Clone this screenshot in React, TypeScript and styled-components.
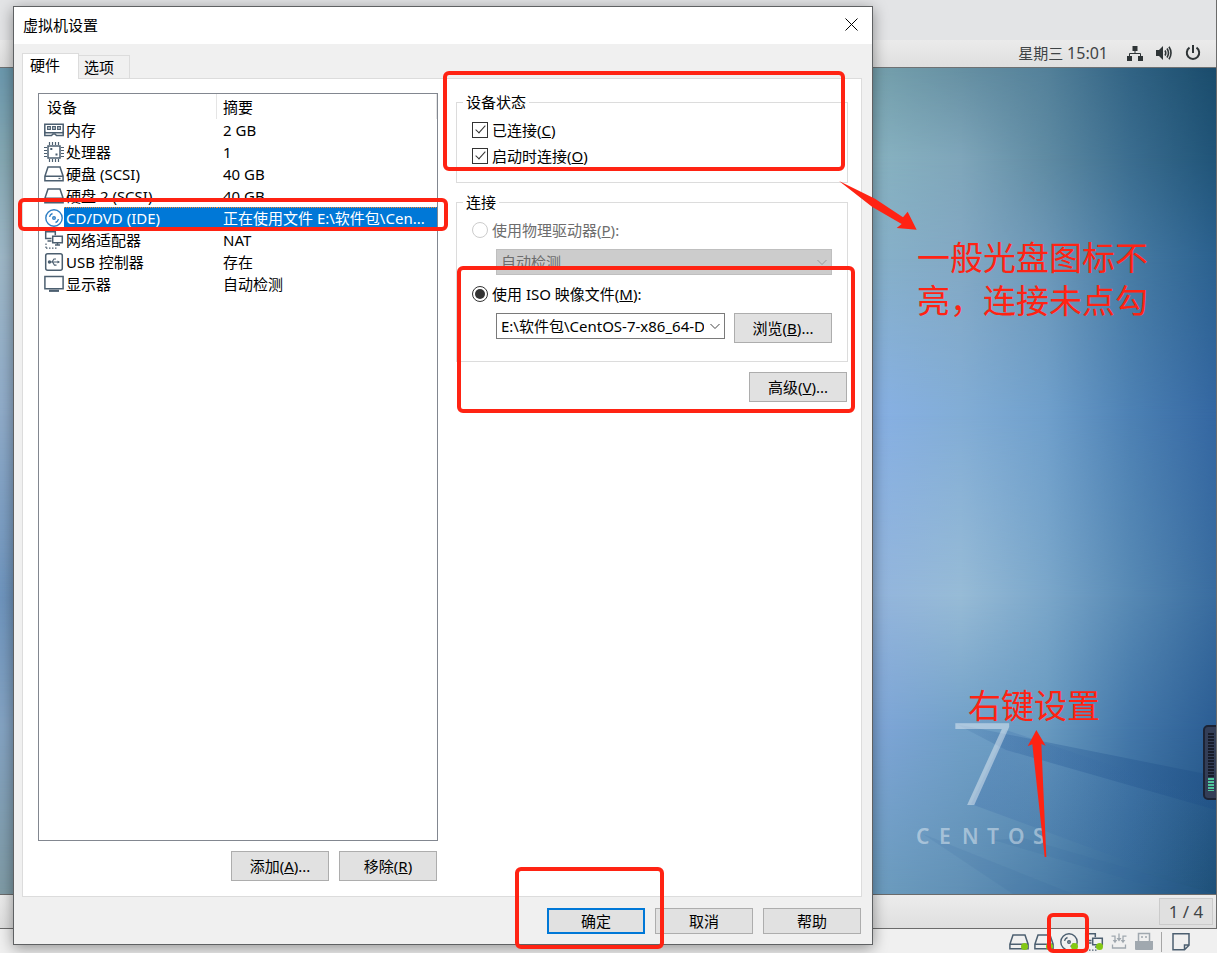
import React from "react";
import styled, { createGlobalStyle, css } from "styled-components";

const RED = "#ff2313";
const SLATE = "#4c5f70";
const LINE = "#dcdcdc";

const GlobalStyle = createGlobalStyle`
  *, *::before, *::after { box-sizing: border-box; }
  body {
    margin: 0;
    background: #f0f0f0;
    color: #000;
    font: 15px/20px "Noto Sans", "Noto Sans CJK SC", sans-serif;
  }
  button, select, input { font: inherit; color: inherit; }
`;

/* ---------- host window and guest desktop ---------- */

const Screen = styled.div`
  position: relative;
  display: flex;
  flex-direction: column;
  min-height: 100vh;
  overflow: hidden;
`;

const Guest = styled.div`
  flex: 1;
  display: flex;
  flex-direction: column;
  border-right: 1px solid #6b6b6b;
  border-bottom: 1px solid #6b6b6b;
  background: #e3e4e6;
`;

const TopBar = styled.header`
  display: flex;
  align-items: center;
  justify-content: flex-end;
  gap: 13px;
  height: 28px;
  margin-top: 40px;
  padding: 0 15px 2px 0;
  border-bottom: 1px solid #6e7173;
  background: linear-gradient(#ebebeb, #dfdfdf);
  color: #2e3436;
`;

const Clock = styled.time`
  margin-right: 6px;
  color: #3f4446;
`;

const ClockDigits = styled.span`
  font-size: 16px;
`;

const Wallpaper = styled.main`
  position: relative;
  flex: 1;
  overflow: hidden;
`;

const WallpaperArt = styled.svg`
  position: absolute;
  inset: 0;
  width: 100%;
  height: 100%;
`;

const LogoArt = styled.svg`
  position: absolute;
  right: 0;
  bottom: 0;
`;

const TaskBar = styled.footer`
  display: flex;
  align-items: center;
  justify-content: flex-end;
  height: 34px;
  padding: 0 3px;
  border-top: 1px solid #6b6b6b;
  background: linear-gradient(#ececec, #dfdfdf);
`;

const Pager = styled.button`
  width: 54px;
  height: 27px;
  padding: 0;
  border: 1px solid #cbcbcb;
  background: #e0e0e0;
  color: #3f4446;
  font-size: 17px;
  line-height: 24px;
`;

const StatusBar = styled.footer`
  display: flex;
  align-items: center;
  justify-content: flex-end;
  gap: 5px;
  height: 24px;
  padding: 2px 26px 0 0;
  background: #f0f0f0;
`;

const StatusItem = styled.span`
  position: relative;
  display: flex;
`;

const Divider = styled.span`
  width: 1px;
  height: 20px;
  margin: 0 4px 0 2px;
  background: #a6a6a6;
`;

const SideMeter = styled.svg`
  position: absolute;
  right: -1px;
  bottom: 93px;
`;

/* ---------- red marks ---------- */

const Frame = styled.span<{ $inset: string; $height?: number }>`
  position: absolute;
  z-index: 3;
  inset: ${(p) => p.$inset};
  height: ${(p) => (p.$height ? `${p.$height}px` : "auto")};
  border: 4px solid ${RED};
  border-radius: 6px;
  pointer-events: none;
`;

const Note = styled.p<{ $inset: string }>`
  position: absolute;
  inset: ${(p) => p.$inset};
  margin: 0;
  color: ${RED};
  font-family: "Noto Sans CJK SC", sans-serif;
  font-size: 33px;
  line-height: 43px;
  white-space: nowrap;
`;

const Arrow = styled.svg<{ $inset: string }>`
  position: absolute;
  z-index: 3;
  inset: ${(p) => p.$inset};
  pointer-events: none;
`;

/* ---------- dialog ---------- */

const Dialog = styled.section`
  position: absolute;
  z-index: 2;
  inset: 6px 344px 8px 13px;
  display: flex;
  flex-direction: column;
  border: 1px solid #5f6163;
  background: #f0f0f0;
  box-shadow: 0 3px 14px rgba(0, 0, 0, 0.4);
`;

const TitleBar = styled.div`
  display: flex;
  align-items: center;
  justify-content: space-between;
  height: 37px;
  padding: 0 13px 2px 9px;
  background: #fff;
`;

const Title = styled.h1`
  margin: 0;
  font-size: 15px;
  font-weight: 400;
`;

const CloseButton = styled.button`
  display: flex;
  padding: 0;
  border: 0;
  background: none;
`;

const Tabs = styled.div`
  display: flex;
  align-items: flex-end;
  height: 34px;
  padding-left: 8px;
`;

const Tab = styled.button<{ $active?: boolean }>`
  position: relative;
  z-index: 1;
  margin-bottom: -1px;
  border: 1px solid ${LINE};
  text-align: left;
  ${(p) =>
    p.$active
      ? css`
          width: 57px;
          height: 26px;
          padding: 0 7px 3px;
          border-bottom: 0;
          background: #fff;
        `
      : css`
          width: 51px;
          height: 24px;
          padding: 0 5px;
          border-left: 0;
          background: #f0f0f0;
        `}
`;

const Panel = styled.div`
  flex: 1;
  display: flex;
  gap: 18px;
  margin: 0 10px 0 8px;
  padding: 14px 13px 15px 15px;
  border: 1px solid ${LINE};
  background: #fff;
`;

const DeviceColumn = styled.div`
  flex: 0 0 400px;
  display: flex;
  flex-direction: column;
  gap: 10px;
`;

const DeviceList = styled.div`
  position: relative;
  flex: 1;
  border: 1px solid #828790;
`;

const DeviceTable = styled.table`
  width: 100%;
  border-collapse: separate;
  border-spacing: 0;
  table-layout: fixed;
  text-align: left;
  white-space: nowrap;
`;

const IconCol = styled.col`
  width: 25px;
`;

const NameCol = styled.col`
  width: 153px;
`;

const HeadCell = styled.th`
  height: 25px;
  padding: 0 0 0 8px;
  border: 0 solid #e5e5e5;
  border-right-width: 1px;
  font-weight: 400;

  & + & { padding-left: 6px; }
`;

const IconCell = styled.td`
  height: 22px;
  padding: 0 0 0 5px;

  svg { display: block; }
`;

const Cell = styled.td`
  height: 22px;
  padding: 0 0 0 2px;
  overflow: hidden;

  & + & { padding-left: 6px; }
`;

const DeviceRow = styled.tr<{ $selected: boolean }>`
  ${(p) =>
    p.$selected &&
    css`
      ${Cell} {
        background: repeating-linear-gradient(90deg, #ff8728 0 1px, #0078d7 1px 2px) top / 100% 1px no-repeat #0078d7;
        color: #fff;
      }
    `}
`;

const Actions = styled.div`
  display: flex;
  justify-content: flex-end;
  gap: 10px;
  padding-right: 1px;
`;

const Button = styled.button<{ $primary?: boolean; $short?: boolean }>`
  flex: none;
  width: 98px;
  height: ${(p) => (p.$short ? 26 : 30)}px;
  padding: 0;
  border: ${(p) => (p.$primary ? "2px solid #0078d7" : "1px solid #adadad")};
  background: #e1e1e1;
`;

const Settings = styled.div`
  flex: 1;
  min-width: 0;
`;

const Group = styled.fieldset`
  position: relative;
  min-width: 0;
  margin: 0 0 10px;
  padding: 0;
  border: 1px solid ${LINE};
`;

const Legend = styled.legend`
  margin-left: 6px;
  padding: 0 3px;
  line-height: 19px;
`;

const GroupBody = styled.div<{ $bottom: number }>`
  display: flex;
  flex-direction: column;
  padding: 5px 15px ${(p) => p.$bottom}px;
`;

const Option = styled.label<{ $disabled?: boolean }>`
  display: flex;
  align-items: center;
  gap: 4px;
  height: 26px;
  color: ${(p) => (p.$disabled ? "#6d6d6d" : "#000")};
`;

const CheckBox = styled.input`
  appearance: none;
  position: relative;
  flex: none;
  width: 16px;
  height: 16px;
  margin: 0;
  border: 1px solid #333;
  background: #fff;

  &:checked::after {
    content: "";
    position: absolute;
    left: 5px;
    top: 0;
    width: 5px;
    height: 10px;
    border: solid #333;
    border-width: 0 1px 1px 0;
    transform: rotate(42deg);
  }
`;

const Radio = styled.input`
  appearance: none;
  flex: none;
  display: grid;
  place-items: center;
  width: 16px;
  height: 16px;
  margin: 0;
  border: 1px solid #333;
  border-radius: 50%;
  background: #fff;

  &:disabled { border-color: #ccc; }

  &:checked::after {
    content: "";
    width: 10px;
    height: 10px;
    border-radius: 50%;
    background: #333;
  }
`;

const Field = styled.div`
  display: flex;
  gap: 9px;
  margin: 6px 0 6px 24px;
`;

const SelectBox = styled.div`
  position: relative;
  flex: 1;
  min-width: 0;

  svg {
    position: absolute;
    right: 5px;
    top: 10px;
    pointer-events: none;
  }
`;

const Select = styled.select`
  appearance: none;
  display: block;
  width: 100%;
  height: 26px;
  padding: 0 20px 1px 4px;
  border: 1px solid #7a7a7a;
  border-radius: 0;
  background: #fff;

  &:disabled {
    border-color: #bfbfbf;
    background: #ccc;
    color: #6d6d6d;
    opacity: 1;
  }
`;

const DialogFooter = styled.div`
  display: flex;
  justify-content: flex-end;
  gap: 10px;
  padding: 11px 11px 10px;
`;

const FramedButton = styled.div`
  position: relative;
  display: flex;
`;

/* ---------- drawings ---------- */

const Svg = ({ children }: { children: React.ReactNode }) => (
  <svg width="20" height="20" viewBox="0 0 20 20" fill="none" stroke={SLATE} strokeWidth="1.5" aria-hidden="true">
    {children}
  </svg>
);

const MemoryIcon = () => (
  <Svg>
    <path d="M.8 4.200h18.400v8.600H.8z" />
    <path d="M3.700 6.700h2.600v2.600H3.700zM8.700 6.700h2.600v2.600H8.700zM13.700 6.700h2.600v2.600h-2.600z" strokeWidth="1.300" />
    <path d="M.8 11.500v4h6.700l1.500-1.500h2l1.500 1.500h6.700v-4" />
  </Svg>
);

const CpuIcon = () => (
  <Svg>
    <path d="M4 4h12v12H4z" />
    <path
      d="M5.500 0v3M8.500 0v3M11.500 0v3M14.500 0v3M5.500 17v3M8.500 17v3M11.500 17v3M14.500 17v3M0 5.500h3M0 8.500h3M0 11.500h3M0 14.500h3M17 5.500h3M17 8.500h3M17 11.500h3M17 14.500h3"
      strokeWidth="1.200"
    />
    <path d="M6.300 7h2M11.500 12.500h2" strokeWidth="2" />
  </Svg>
);

const DiskIcon = () => (
  <Svg>
    <path d="M.9 12.200 4 3h12l3.100 9.200v4.500H.9zM.9 12.200h18.200" />
    <path d="M14.500 14.500h2" strokeWidth="1.300" />
  </Svg>
);

const DiscIcon = ({ color = SLATE }: { color?: string }) => (
  <Svg>
    <g stroke={color} strokeWidth="1.400">
      <circle cx="10" cy="10" r="8.200" />
      <circle cx="10" cy="10" r="1.300" />
      <path d="M5.500 8.800A4.700 4.700 0 0 1 8.500 5.500M14.500 11.200a4.700 4.700 0 0 1-3 3.300" />
    </g>
  </Svg>
);

const NetIcon = () => (
  <Svg>
    <path d="M7.500 8.500H1.700V1.700h9.600v3.600M3.500 11h4" />
    <path d="M8.700 6.200h9.600v6.600H8.700zM11 15h5M13.500 13v2" />
    <path d="M2 13.500v5M2 18.200h11" strokeDasharray="1.500 1.500" strokeWidth="1.200" />
  </Svg>
);

const UsbIcon = () => (
  <Svg>
    <rect x="1.700" y="1.700" width="16.600" height="16.600" rx="2" />
    <path d="M5 10h10M8 10l2-3h2M8.500 10l2 3.200h2" strokeWidth="1.200" />
    <circle cx="5.500" cy="10" r="1" fill={SLATE} />
    <path d="m13.500 8.500 2.500 1.500-2.500 1.500z" fill={SLATE} strokeWidth="0" />
  </Svg>
);

const DisplayIcon = () => (
  <Svg>
    <path d="M.9 2.500h18.200v12.200H.9z" />
    <path d="M5 16.800h10" strokeWidth="2.200" />
  </Svg>
);

const NoteIcon = () => (
  <Svg>
    <path d="M2 1.800h16v11.500l-4.500 4.500H2zM18 13h-4.500v4.800" />
  </Svg>
);

const LiveDot = styled.i`
  position: absolute;
  right: 1px;
  bottom: 2px;
  width: 7px;
  height: 7px;
  border-radius: 50%;
  background: #84c814;
`;

const Chevron = ({ muted }: { muted?: boolean }) => (
  <svg width="10" height="7" viewBox="0 0 10 7" fill="none" stroke={muted ? "#999" : "#444"} aria-hidden="true">
    <path d="m.5 1 4.500 4.500L9.500 1" />
  </svg>
);

/* Colour rows of the wallpaper: a height in percent, then stops from left to right. */
const STOPS = [0, 72.5, 79, 86, 93, 100];
const ROWS: [number, string[]][] = [
  [0, ["#6c99ae", "#749fac", "#6690a3", "#54819a", "#316384", "#1a4c6c"]],
  [11, ["#86a9b4", "#87b1c0", "#7fa6ba", "#5f8ba3", "#3b6d8f", "#205478"]],
  [23, ["#9fb8c8", "#86b0c9", "#83a9c4", "#6d98b8", "#477ba3", "#2b618f"]],
  [42, ["#90acca", "#87b0e3", "#82add6", "#70a0cc", "#4d81b4", "#3467a2"]],
  [64, ["#6f95be", "#93b5dc", "#97bbd6", "#7ba7ca", "#5789b4", "#396c9f"]],
  [80, ["#85a4c3", "#7da5d6", "#71a0c8", "#689ac0", "#4377a9", "#2b5d93"]],
  [100, ["#7f9ba5", "#6b9bbd", "#6190b5", "#4c7ea8", "#346896", "#1e5078"]],
];

const WallpaperPicture = () => (
  <WallpaperArt viewBox="0 0 100 100" preserveAspectRatio="none" aria-hidden="true">
    <defs>
      {ROWS.map(([y, colors], i) => (
        <React.Fragment key={y}>
          <linearGradient id={`row${i}`}>
            {colors.map((c, k) => (
              <stop key={k} offset={`${STOPS[k]}%`} stopColor={c} />
            ))}
          </linearGradient>
          {i > 0 && (
            <>
              <linearGradient id={`fade${i}`} gradientUnits="userSpaceOnUse" x1="0" x2="0" y1={ROWS[i - 1][0]} y2={y}>
                <stop offset="0" stopColor="#fff" stopOpacity="0" />
                <stop offset="1" stopColor="#fff" />
              </linearGradient>
              <mask id={`mask${i}`} maskUnits="userSpaceOnUse" x="0" y="0" width="100" height="100" style={{ maskType: "alpha" }}>
                <rect width="100" height="100" fill={`url(#fade${i})`} />
              </mask>
            </>
          )}
        </React.Fragment>
      ))}
    </defs>
    {ROWS.map(([y], i) => (
      <rect key={y} width="100" height="100" fill={`url(#row${i})`} mask={i ? `url(#mask${i})` : undefined} />
    ))}
  </WallpaperArt>
);

const CentosLogo = () => (
  <LogoArt width="343" height="224" viewBox="0 -40 343 224" aria-label="CentOS 7">
    <defs>
      <linearGradient id="beam">
        <stop offset="0" stopColor="#2c5f9b" stopOpacity="0.100" />
        <stop offset="0.300" stopColor="#2c5f9b" stopOpacity="0.350" />
        <stop offset="1" stopColor="#1e4f86" stopOpacity="0.450" />
      </linearGradient>
      <linearGradient id="haze">
        <stop offset="0" stopColor="#3a6cab" stopOpacity="0.280" />
        <stop offset="1" stopColor="#2f629b" stopOpacity="0" />
      </linearGradient>
    </defs>
    <path d="M83 14 343 66v34L133 40z" fill="url(#beam)" />
    <path d="M133 20 343 90v94L98 94z" fill="url(#haze)" />
    <path d="M150 128 343 184h-38L120 130zM50 124l150 60h-60z" fill="#2f629b" opacity="0.120" />
    <text x="78" y="95" fill="#fff" fillOpacity="0.420" fontFamily="Roboto" fontWeight="300" fontSize="115">
      7
    </text>
    <text
      x="43 66 89 114 135 160"
      y="134"
      fill="#fff"
      fillOpacity="0.420"
      fontFamily="Noto Sans"
      fontWeight="600"
      fontSize="21"
    >
      CENTOS
    </text>
  </LogoArt>
);

/* ---------- data ---------- */

const DEVICES = [
  { icon: <MemoryIcon />, name: "内存", summary: "2 GB" },
  { icon: <CpuIcon />, name: "处理器", summary: "1" },
  { icon: <DiskIcon />, name: "硬盘 (SCSI)", summary: "40 GB" },
  { icon: <DiskIcon />, name: "硬盘 2 (SCSI)", summary: "40 GB" },
  { icon: <DiscIcon color="#2f7fc4" />, name: "CD/DVD (IDE)", summary: "正在使用文件 E:\\软件包\\Cen...", selected: true },
  { icon: <NetIcon />, name: "网络适配器", summary: "NAT" },
  { icon: <UsbIcon />, name: "USB 控制器", summary: "存在" },
  { icon: <DisplayIcon />, name: "显示器", summary: "自动检测" },
];

const Key = ({ text, k, tail = "" }: { text: string; k: string; tail?: string }) => (
  <span>
    {text}(<u>{k}</u>){tail}
  </span>
);

export default function App() {
  return (
    <Screen>
      <GlobalStyle />
      <Guest>
        <TopBar>
          <Clock>
            星期三 <ClockDigits>15:01</ClockDigits>
          </Clock>
          <svg width="16" height="16" viewBox="0 0 16 16" fill="#2e3436" aria-hidden="true">
            <path d="M5.500 1h5v5h-5zM0 11h5v5H0zM11 11h5v5h-5z" />
            <path d="M8 6v2.500M2.500 11V8.500h11V11" fill="none" stroke="#2e3436" />
          </svg>
          <svg width="16" height="16" viewBox="0 0 16 16" fill="#2e3436" aria-hidden="true">
            <path d="M0 5h3l4-4v14l-4-4H0z" />
            <path d="M9 5.500q1.500 2.500 0 5M11 3.500q3 4.500 0 9M13 1.800q4 6.200 0 12.400" fill="none" stroke="#2e3436" strokeWidth="1.600" />
          </svg>
          <svg width="16" height="16" viewBox="0 0 16 16" fill="none" stroke="#2e3436" strokeWidth="2" aria-hidden="true">
            <path d="M4.500 2.700a6.200 6.200 0 1 0 7 0M8 0v8" />
          </svg>
        </TopBar>
        <Wallpaper>
          <WallpaperPicture />
          <CentosLogo />
          <Note $inset="167px 68px auto auto">
            一般光盘图标不
            <br />
            亮，连接未点勾
          </Note>
          <Note $inset="auto 116px 168px auto">右键设置</Note>
          <Arrow $inset="auto 169px 37px auto" width="20" height="127" viewBox="0 0 60 381" fill={RED}>
            <path d="m28 0 28 47-13-5 15 339h-5L16 43 2 49z" />
          </Arrow>
          <SideMeter width="14" height="76" viewBox="0 0 14 76" aria-hidden="true">
            <rect x="1" y="1" width="20" height="73" rx="4" fill="#333e57" stroke="#1c2334" strokeWidth="2" />
            <path d="M8 8v45" stroke="#171c2a" strokeWidth="6" strokeDasharray="2 1" />
            <path d="M8 53v13" stroke="#4fc79d" strokeWidth="6" strokeDasharray="2 1" />
          </SideMeter>
        </Wallpaper>
        <TaskBar>
          <Pager type="button">1 / 4</Pager>
        </TaskBar>
      </Guest>
      <StatusBar>
        <StatusItem>
          <DiskIcon />
          <LiveDot />
        </StatusItem>
        <StatusItem>
          <DiskIcon />
          <LiveDot />
        </StatusItem>
        <StatusItem>
          <DiscIcon />
          <LiveDot />
          <Frame $inset="-19px -10px -1px -12px" />
        </StatusItem>
        <StatusItem>
          <NetIcon />
          <LiveDot />
        </StatusItem>
        <svg width="20" height="20" viewBox="0 0 20 20" fill="#a0a8af" aria-hidden="true">
          <path d="M10 1.500v5M2.500 4.200H6v4M17.500 4.200H14v4M3.500 12.500V16h13v-3.500" fill="none" stroke="#a0a8af" strokeWidth="1.300" />
          <path d="M7.500 6h5L10 9.500zM3.700 8h4.600L6 11.200zM11.700 8h4.600L14 11.200z" />
        </svg>
        <svg width="20" height="20" viewBox="0 0 20 20" fill="#a0a8af" aria-hidden="true">
          <path d="M1 9h18v8a1 1 0 0 1-1 1H2a1 1 0 0 1-1-1z" />
          <path d="M4.500 9V1.500h11V9" fill="none" stroke="#a0a8af" strokeWidth="1.500" />
          <path d="M7 5h2M11 5h2" stroke="#a0a8af" strokeWidth="1.500" />
        </svg>
        <Divider />
        <NoteIcon />
      </StatusBar>

      <Dialog role="dialog" aria-labelledby="dialog-title">
        <TitleBar>
          <Title id="dialog-title">虚拟机设置</Title>
          <CloseButton type="button" aria-label="关闭">
            <svg width="15" height="15" viewBox="0 0 15 15" stroke="#000" aria-hidden="true">
              <path d="m1.500 1.500 12 12M13.500 1.500l-12 12" />
            </svg>
          </CloseButton>
        </TitleBar>
        <Tabs role="tablist">
          <Tab type="button" role="tab" aria-selected="true" $active>
            硬件
          </Tab>
          <Tab type="button" role="tab" aria-selected="false">
            选项
          </Tab>
        </Tabs>
        <Panel>
          <DeviceColumn>
            <DeviceList>
              <DeviceTable>
                <colgroup>
                  <IconCol />
                  <NameCol />
                  <col />
                </colgroup>
                <thead>
                  <tr>
                    <HeadCell colSpan={2}>设备</HeadCell>
                    <HeadCell>摘要</HeadCell>
                  </tr>
                </thead>
                <tbody>
                  {DEVICES.map((d) => (
                    <DeviceRow key={d.name} $selected={!!d.selected}>
                      <IconCell>{d.icon}</IconCell>
                      <Cell>{d.name}</Cell>
                      <Cell>{d.summary}</Cell>
                    </DeviceRow>
                  ))}
                </tbody>
              </DeviceTable>
              <Frame $inset="104px -11px auto -21px" $height={33} />
            </DeviceList>
            <Actions>
              <Button type="button">
                <Key text="添加" k="A" tail="..." />
              </Button>
              <Button type="button">
                <Key text="移除" k="R" />
              </Button>
            </Actions>
          </DeviceColumn>

          <Settings>
            <Group>
              <Legend>设备状态</Legend>
              <GroupBody $bottom={13}>
                <Option>
                  <CheckBox type="checkbox" defaultChecked />
                  <Key text="已连接" k="C" />
                </Option>
                <Option>
                  <CheckBox type="checkbox" defaultChecked />
                  <Key text="启动时连接" k="O" />
                </Option>
              </GroupBody>
              <Frame $inset="-41px 2px 11px -14px" />
              <Arrow $inset="auto -70px -48px auto" width="78" height="49" viewBox="0 0 234 147" fill={RED}>
                <path d="m0 0 108 53 84 56 14-17 27 54-60-5 15-12-88-51z" />
              </Arrow>
            </Group>
            <Group>
              <Legend>连接</Legend>
              <GroupBody $bottom={12}>
                <Option $disabled>
                  <Radio type="radio" name="source" disabled />
                  <Key text="使用物理驱动器" k="P" tail=":" />
                </Option>
                <Field>
                  <SelectBox>
                    <Select disabled aria-label="物理驱动器">
                      <option>自动检测</option>
                    </Select>
                    <Chevron muted />
                  </SelectBox>
                </Field>
                <Option>
                  <Radio type="radio" name="source" defaultChecked />
                  <Key text="使用 ISO 映像文件" k="M" tail=":" />
                </Option>
                <Field>
                  <SelectBox>
                    <Select aria-label="ISO 映像文件">
                      <option>E:\软件包\CentOS-7-x86_64-D</option>
                    </Select>
                    <Chevron />
                  </SelectBox>
                  <Button type="button">
                    <Key text="浏览" k="B" tail="..." />
                  </Button>
                </Field>
              </GroupBody>
              <Frame $inset="54px -8px -52px 0" />
            </Group>
            <Actions>
              <Button type="button">
                <Key text="高级" k="V" tail="..." />
              </Button>
            </Actions>
          </Settings>
        </Panel>
        <DialogFooter>
          <FramedButton>
            <Button type="button" $primary $short>
              确定
            </Button>
            <Frame $inset="-41px -19px -15px -32px" />
          </FramedButton>
          <Button type="button" $short>
            取消
          </Button>
          <Button type="button" $short>
            帮助
          </Button>
        </DialogFooter>
      </Dialog>
    </Screen>
  );
}
